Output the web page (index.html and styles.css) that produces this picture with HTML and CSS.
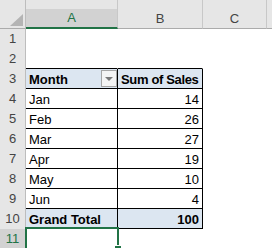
FILE: index.html
```html
<!DOCTYPE html>
<html lang="en">
<head>
    <meta charset="UTF-8" />
    <meta name="viewport" content="width=device-width, initial-scale=1.0"/>
    <title>Pivot</title>
    <link rel="stylesheet" href="styles.css">
</head>
<body>
    <div class="sheet">
        <!-- column headers -->
        <div class="corner"><span class="corner-tri"></span></div>
        <div class="colhead active">A</div>
        <div class="colhead">B</div>
        <div class="colhead">C</div>
        <div class="colhead rest"></div>

        <div class="rowhead">1</div><div class="cell"></div><div class="cell"></div><div class="cell"></div><div class="cell"></div>
        <div class="rowhead">2</div><div class="cell pv-top"></div><div class="cell pv-top"></div><div class="cell"></div><div class="cell"></div>

        <div class="rowhead">3</div>
        <div class="cell pv pv-head has-filter">
            <span class="label">Month</span>
            <span class="filter-btn"><span class="filter-arrow"></span></span>
        </div>
        <div class="cell pv pv-head tight">Sum of Sales</div>
        <div class="cell"></div><div class="cell"></div>

        <div class="rowhead">4</div><div class="cell pv">Jan</div><div class="cell pv num">14</div><div class="cell"></div><div class="cell"></div>
        <div class="rowhead">5</div><div class="cell pv">Feb</div><div class="cell pv num">26</div><div class="cell"></div><div class="cell"></div>
        <div class="rowhead">6</div><div class="cell pv">Mar</div><div class="cell pv num">27</div><div class="cell"></div><div class="cell"></div>
        <div class="rowhead">7</div><div class="cell pv">Apr</div><div class="cell pv num">19</div><div class="cell"></div><div class="cell"></div>
        <div class="rowhead">8</div><div class="cell pv">May</div><div class="cell pv num">10</div><div class="cell"></div><div class="cell"></div>
        <div class="rowhead">9</div><div class="cell pv">Jun</div><div class="cell pv num">4</div><div class="cell"></div><div class="cell"></div>

        <div class="rowhead">10</div>
        <div class="cell pv pv-head">Grand Total</div>
        <div class="cell pv pv-head num">100</div>
        <div class="cell"></div><div class="cell"></div>

        <div class="rowhead active">11</div><div class="cell"></div><div class="cell"></div><div class="cell"></div><div class="cell"></div>

        <div class="selection"><span class="fill-handle"></span></div>
    </div>
</body>
</html>
```

FILE: styles.css
```css
body {
    margin: 0;
    background: #fff;
    font-family: "Liberation Sans", Arial, sans-serif;
    font-size: 13px;
    overflow: hidden;
}

.sheet {
    position: relative;
    display: grid;
    grid-template-columns: 26px 92px 85px 64px 5px;
    grid-template-rows: 29px repeat(11, 20px);
    color: #000;
}

.corner {
    position: relative;
    background: #e6e6e6;
    border-right: 1px solid #bdbdbd;
    border-bottom: 1px solid #ababab;
}

.corner-tri {
    position: absolute;
    right: 2px;
    bottom: 2px;
    width: 0;
    height: 0;
    border-left: 13px solid transparent;
    border-bottom: 12px solid #b4b4b4;
}

.colhead {
    box-sizing: border-box;
    background: #e6e6e6;
    border-bottom: 1px solid #ababab;
    border-right: 1px solid #c8c8c8;
    padding-top: 9px;
    line-height: 19px;
    text-align: center;
    color: #444;
    background-clip: content-box;
    box-shadow: inset 0 9px 0 #e6e6e6;
}

.colhead.active {
    background: #d2d2d2;
    background-clip: content-box;
    border-bottom: 2px solid #217346;
    color: #217346;
    line-height: 18px;
}

.colhead.rest {
    border-right: none;
}

.rowhead {
    box-sizing: border-box;
    background: #e6e6e6;
    border-right: 1px solid #bdbdbd;
    line-height: 20px;
    text-align: center;
    color: #444;
}

.rowhead.active {
    background: #d2d2d2;
    color: #217346;
}

.cell {
    box-sizing: border-box;
    line-height: 19px;
    padding: 0 3px;
    white-space: nowrap;
    border-bottom: 1px solid transparent;
    border-right: 1px solid transparent;
}

.pv-top {
    border-bottom-color: #000;
}

.pv {
    border-right-color: #000;
    border-bottom-color: #000;
    padding-top: 1px;
}

.pv-head {
    background: #dce6f1;
    font-weight: bold;
}

.tight {
    letter-spacing: -0.35px;
}

.num {
    text-align: right;
}

.has-filter {
    display: flex;
    justify-content: space-between;
    padding-right: 0;
    padding-top: 0;
}

.has-filter .label {
    padding-top: 1px;
}

.filter-btn {
    box-sizing: border-box;
    width: 16px;
    height: 17px;
    margin-top: 1px;
    border: 1px solid #a6a6a6;
    background: #f4f4f4;
    display: flex;
    align-items: center;
    justify-content: center;
}

.filter-arrow {
    width: 0;
    height: 0;
    border-left: 4px solid transparent;
    border-right: 4px solid transparent;
    border-top: 4px solid #7a7a7a;
    margin-top: 1px;
}

.selection {
    position: absolute;
    left: 25px;
    top: 227px;
    width: 94px;
    height: 30px;
    box-sizing: border-box;
    border: 2px solid #217346;
}

.fill-handle {
    position: absolute;
    right: -5px;
    top: 16px;
    width: 6px;
    height: 6px;
    background: #217346;
    border: 1px solid #fff;
}
```
